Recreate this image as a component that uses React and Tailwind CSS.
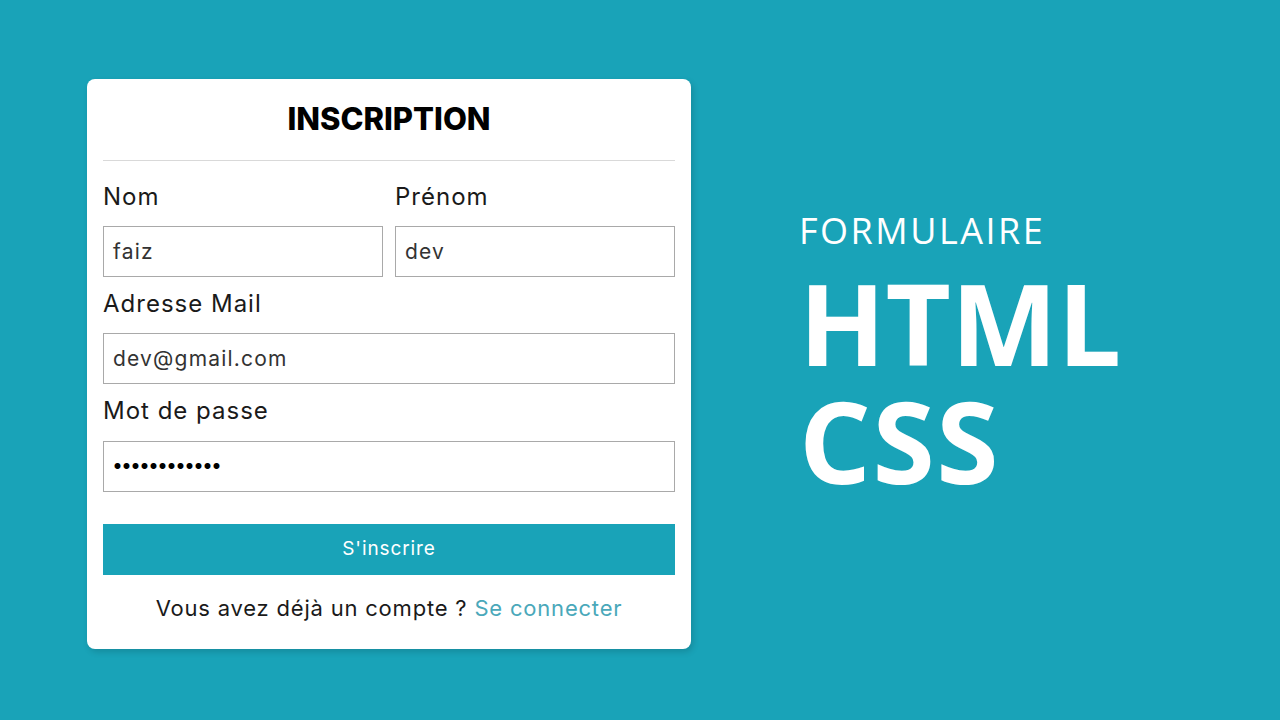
export default function App() {
  const font = { fontFamily: '"Inter", "Noto Sans", sans-serif' };
  const label = "text-[24px] leading-[30px] tracking-[1px] text-[#1a1a1a]";
  const input = "h-[51px] border border-[#a9a9a9] flex items-center px-[9px] text-[21px] tracking-[1.2px] text-[#333]";
  return (
    <div className="w-[1280px] h-[720px] bg-[#19a3b8] flex overflow-hidden" style={font}>
      <div className="pl-[87px] pt-[79px]">
        <div className="w-[604px] h-[570px] bg-white rounded-lg px-4 shadow-[2px_3px_6px_rgba(0,0,0,0.15)] flex flex-col">
          <h1 className="text-center text-[31px] font-extrabold text-black pt-[21px] pb-[22px] leading-[38px]">INSCRIPTION</h1>
          <div className="h-px bg-[#d9d9d9]" />
          <div className="grid grid-cols-2 gap-x-3 mt-[21px]">
            <div className="flex flex-col">
              <label className={label}>Nom</label>
              <div className={"mt-[14px] " + input}>faiz</div>
            </div>
            <div className="flex flex-col">
              <label className={label}>Prénom</label>
              <div className={"mt-[14px] " + input}>dev</div>
            </div>
          </div>
          <label className={"mt-[12px] " + label}>Adresse Mail</label>
          <div className={"mt-[14px] " + input}>dev@gmail.com</div>
          <label className={"mt-[12px] " + label}>Mot de passe</label>
          <div className="mt-[15px] h-[51px] border border-[#a9a9a9] flex items-center px-[9px] text-[19px] text-black font-bold">••••••••••••</div>
          <button className="mt-[32px] h-[51px] bg-[#19a3b8] text-white text-[19px] tracking-[0.9px]">S'inscrire</button>
          <p className="mt-[19px] text-center text-[22px] leading-[28px] tracking-[0.8px] text-[#1a1a1a]">
            Vous avez déjà un compte ? <span className="text-[#4aa8ba]">Se connecter</span>
          </p>
        </div>
      </div>
      <div className="ml-[108px] pt-[207px] text-white" style={{ fontFamily: '"Open Sans", sans-serif' }}>
        <div className="text-[36px] tracking-[2.5px] leading-[48px]">FORMULAIRE</div>
        <div className="text-[113px] font-bold leading-[100px] mt-[17px]">HTML</div>
        <div className="text-[113px] font-bold leading-[100px] mt-[18px] tracking-[1.5px]">CSS</div>
      </div>
    </div>
  );
}
